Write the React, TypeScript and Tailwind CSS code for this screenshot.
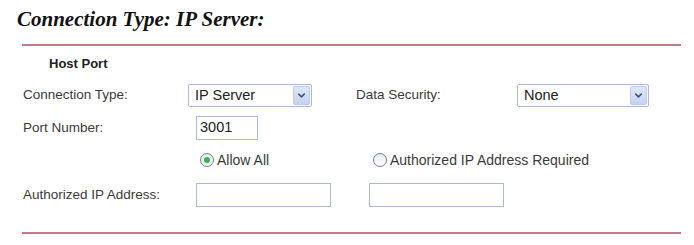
import { ChevronDown } from "lucide-react";

function Select({ value, width }: { value: string; width: string }) {
  return (
    <div
      className={`${width} flex h-[23px] items-center justify-between rounded-[2px] border border-[#a9bbd3] bg-white p-px`}
    >
      <span className="pl-[5px] text-[14.5px] text-[#222]">{value}</span>
      <span className="flex h-full w-[17px] items-center justify-center rounded-[2px] border border-[#bccbe8] bg-gradient-to-b from-[#dfe7f8] to-[#c5d3f1]">
        <ChevronDown size={11} strokeWidth={3.5} className="text-[#4a5670]" />
      </span>
    </div>
  );
}

function TextBox({ value, width }: { value?: string; width: string }) {
  return (
    <div
      className={`${width} flex h-[24px] items-center border border-[#a9bbd3] bg-white pl-[3px] text-[14.5px] text-[#222]`}
    >
      {value}
    </div>
  );
}

function Radio({ checked, label }: { checked?: boolean; label: string }) {
  return (
    <label className="flex items-center gap-[3px] text-[14px]">
      <span className="flex h-[14px] w-[14px] items-center justify-center rounded-full border border-[#6f7f93] bg-gradient-to-b from-[#e8ebef] to-white">
        {checked && <span className="h-[6px] w-[6px] rounded-full bg-[#35b54a]" />}
      </span>
      <span>{label}</span>
    </label>
  );
}

export default function App() {
  return (
    <div className="h-[245px] w-[694px] overflow-hidden bg-white font-['Liberation_Sans',Arial,sans-serif] text-[13.5px] text-[#3a3a3a]">
      <h1 className="ml-[17px] mt-[7px] font-['Liberation_Serif','Times_New_Roman',serif] text-[21px] font-bold italic leading-[24px] text-[#111]">
        Connection Type: IP Server:
      </h1>

      <div className="ml-[22px] mr-[13px] mt-[13px] h-[2px] bg-[#c47c86]" />

      <div className="ml-[49px] mt-[10px] text-[13px] font-bold leading-[15px] text-[#222]">
        Host Port
      </div>

      <div className="mt-[13px] flex items-center pl-[23px]">
        <span className="w-[165px]">Connection Type:</span>
        <Select value="IP Server" width="w-[124px]" />
        <span className="ml-[44px] w-[161px]">Data Security:</span>
        <Select value="None" width="w-[132px]" />
      </div>

      <div className="mt-[9px] flex items-center pl-[23px]">
        <span className="w-[173px]">Port Number:</span>
        <TextBox value="3001" width="w-[62px]" />
      </div>

      <div className="mt-[12px] flex h-[16px] items-center pl-[200px]">
        <div className="w-[173px]">
          <Radio checked label="Allow All" />
        </div>
        <Radio label="Authorized IP Address Required" />
      </div>

      <div className="mt-[15px] flex items-center pl-[23px]">
        <span className="w-[173px]">Authorized IP Address:</span>
        <TextBox width="w-[135px]" />
        <div className="ml-[38px]">
          <TextBox width="w-[135px]" />
        </div>
      </div>

      <div className="ml-[22px] mr-[13px] mt-[25px] h-[2px] bg-[#c47c86]" />
    </div>
  );
}
